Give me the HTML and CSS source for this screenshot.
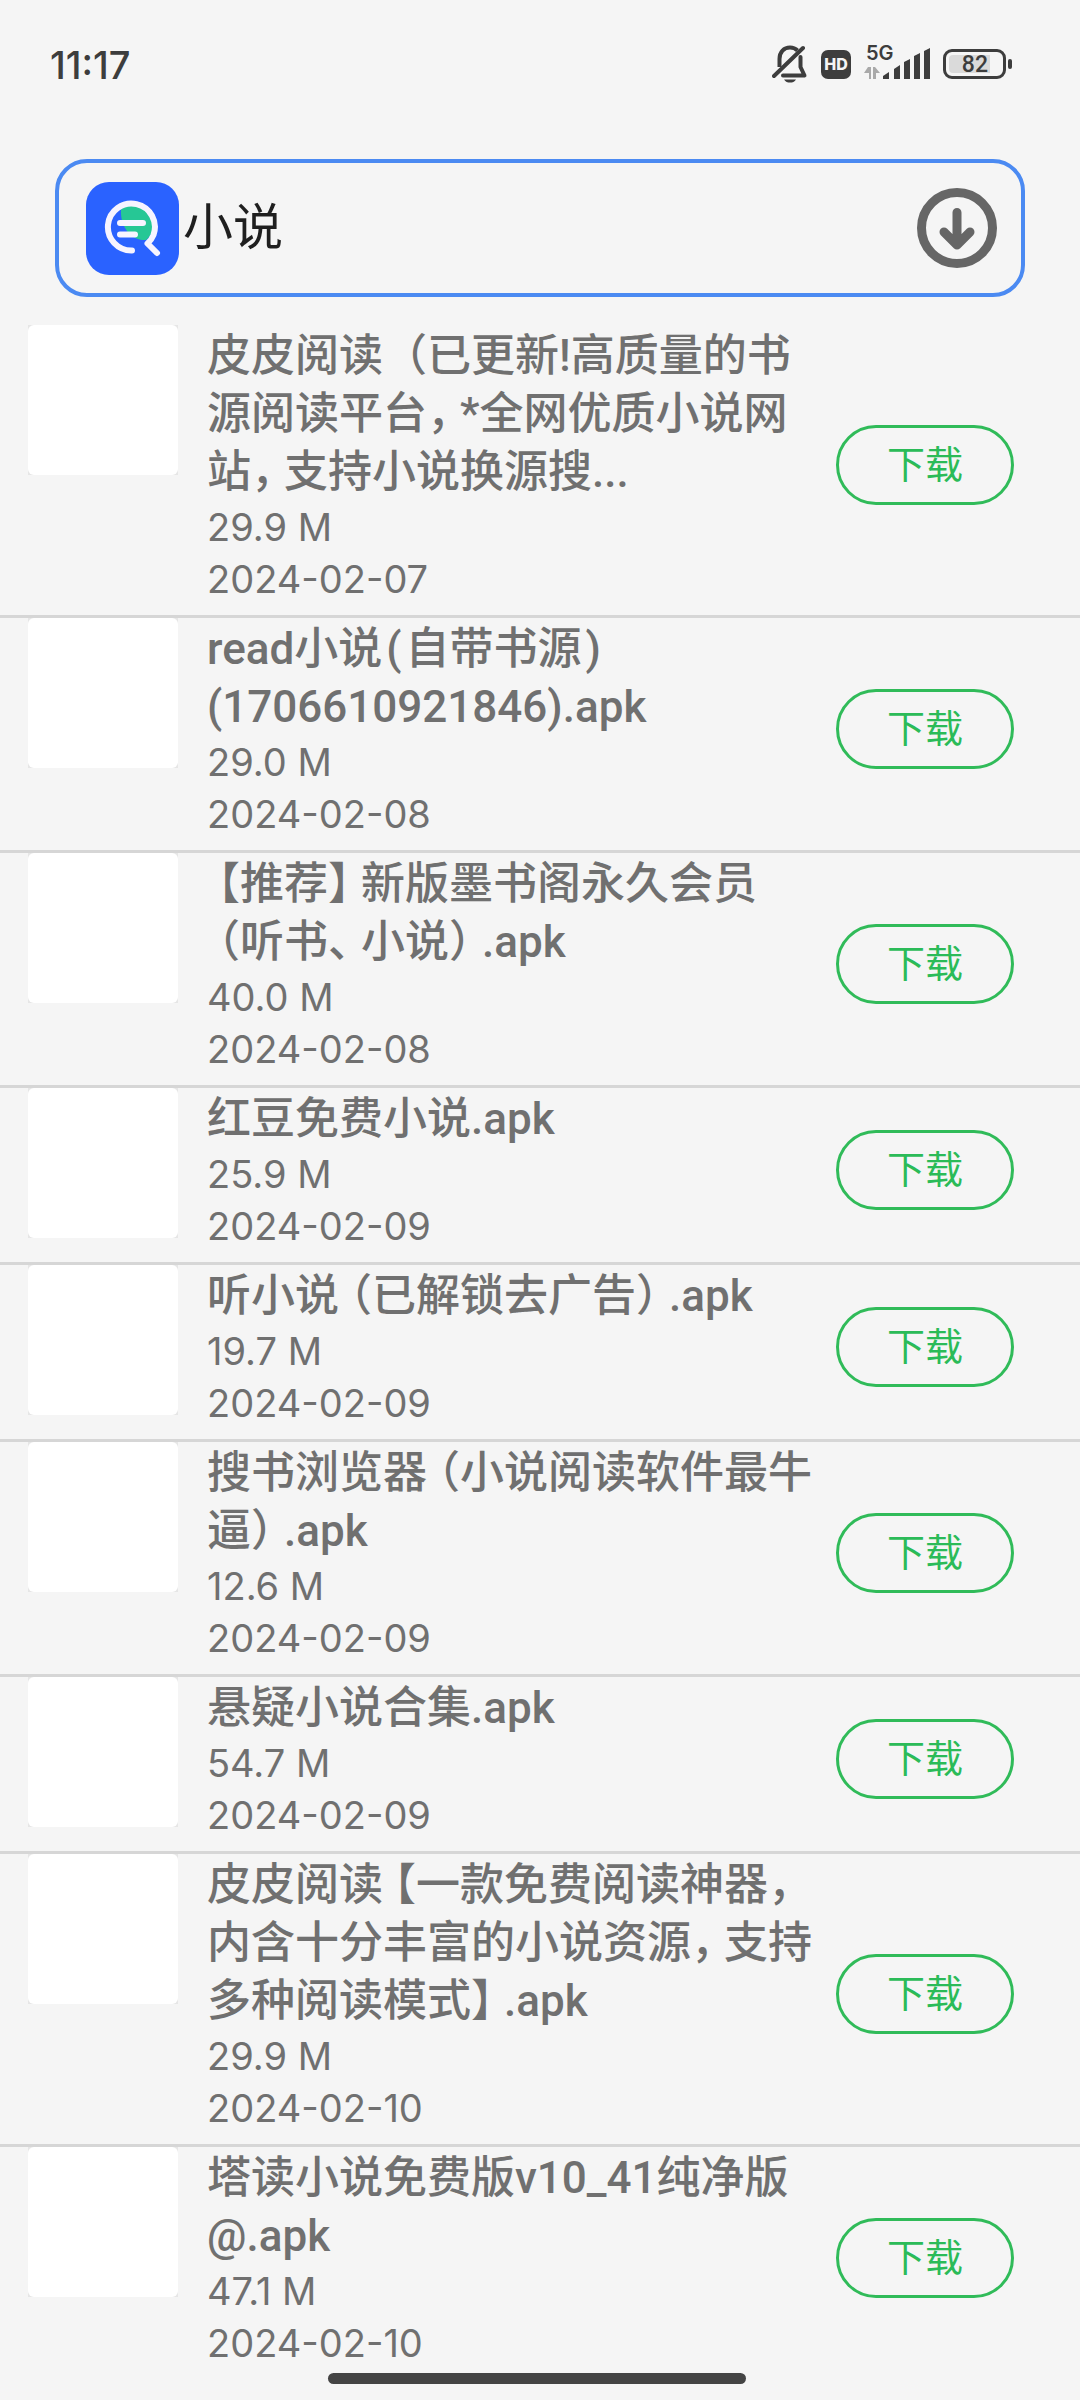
FILE: index.html
```html
<!DOCTYPE html>
<html lang="zh-CN">
<head>
<meta charset="utf-8">
<meta name="viewport" content="width=device-width, initial-scale=1">
<title>小说</title>
<link rel="stylesheet" href="styles.css">
</head>
<body>
<div class="status">
  <span class="time">11:17</span>
  <div class="status-icons">
    <svg class="bell" width="36" height="38" viewBox="0 0 36 38" fill="none" stroke="#3d3d3d" stroke-width="4">
      <path d="M7.500 22V14C7.500 7 12 2.500 18 2.500c3 0 5.500 1 7.500 3"/>
      <path d="M28.500 12v10l4 8.500H11" stroke-linejoin="round" stroke-linecap="round"/>
      <path d="M2 31 31 3" stroke-linecap="round"/>
      <path d="M12 34.500h12c-1.500 2.500-3.500 3-6 3s-4.500-.5-6-3z" fill="#3d3d3d" stroke="none"/>
    </svg>
    <span class="hd">HD</span>
    <div class="signal">
      <span class="net">5G</span>
      <svg width="66" height="32" viewBox="0 0 66 32">
        <path fill="#a9a9a9" d="M4 19h3v12H5v-6H0zM9 31V19h2l5 6h-4v6z"/>
        <g fill="#3d3d3d"><path d="M19 28l6-4v7h-6zM30 21l6-4v14h-6zM40 14l6-3v20h-6zM50 8l6-3v26h-6zM60 3l6-3v31h-6z"/></g>
      </svg>
    </div>
    <div class="battery"><span class="level">82</span></div>
  </div>
</div>

<form class="search">
  <svg class="logo" width="93" height="93" viewBox="0 0 93 93">
    <rect width="93" height="93" rx="23" fill="#2a62ff"/>
    <path d="M35 27.500C43 20 58 22 64.500 34c5 9 2 19-4.500 24-14 1-26-12-25-30.500z" fill="#26c795"/>
    <path d="M46 68.500A23.500 23.500 0 1 1 67.500 53q-2 5-6 8.500L71 71" fill="none" stroke="#f6f4ff" stroke-width="6" stroke-linecap="round" stroke-linejoin="round"/>
    <path d="M34 41h23M34 52.500h15" stroke="#f6f4ff" stroke-width="6" stroke-linecap="round"/>
  </svg>
  <input class="query" type="text" value="小说" aria-label="搜索">
  <button class="downloads" type="button" aria-label="下载管理">
    <svg width="80" height="80" viewBox="0 0 80 80" fill="none" stroke="#666" stroke-width="9" stroke-linecap="round" stroke-linejoin="round">
      <circle cx="40" cy="40" r="35.500"/>
      <path d="M40 24.500V56M27 44l13 13 13-13"/>
    </svg>
  </button>
</form>

<ul class="list">
  <li class="item">
    <div class="thumb"></div>
    <div class="info">
      <h2>皮皮阅读（已更新!高质量的书<br>源阅读平台<span class="close">，</span>*全网优质小说网<br>站<span class="close">，</span>支持小说换源搜...</h2>
      <p>29.9 M</p><p>2024-02-07</p>
    </div>
    <button class="get" type="button">下载</button>
  </li>
  <li class="item">
    <div class="thumb"></div>
    <div class="info">
      <h2>read小说<span class="paren">(</span>自带书源<span class="paren">)</span><br>(1706610921846).apk</h2>
      <p>29.0 M</p><p>2024-02-08</p>
    </div>
    <button class="get" type="button">下载</button>
  </li>
  <li class="item">
    <div class="thumb"></div>
    <div class="info">
      <h2><span class="open">【</span>推荐<span class="close">】</span>新版墨书阁永久会员<br><span class="open">（</span>听书<span class="close">、</span>小说<span class="close">）</span>.apk</h2>
      <p>40.0 M</p><p>2024-02-08</p>
    </div>
    <button class="get" type="button">下载</button>
  </li>
  <li class="item">
    <div class="thumb"></div>
    <div class="info">
      <h2>红豆免费小说.apk</h2>
      <p>25.9 M</p><p>2024-02-09</p>
    </div>
    <button class="get" type="button">下载</button>
  </li>
  <li class="item">
    <div class="thumb"></div>
    <div class="info">
      <h2>听小说<span class="open">（</span>已解锁去广告<span class="close">）</span>.apk</h2>
      <p>19.7 M</p><p>2024-02-09</p>
    </div>
    <button class="get" type="button">下载</button>
  </li>
  <li class="item">
    <div class="thumb"></div>
    <div class="info">
      <h2>搜书浏览器<span class="open">（</span>小说阅读软件最牛<br>逼<span class="close">）</span>.apk</h2>
      <p>12.6 M</p><p>2024-02-09</p>
    </div>
    <button class="get" type="button">下载</button>
  </li>
  <li class="item">
    <div class="thumb"></div>
    <div class="info">
      <h2>悬疑小说合集.apk</h2>
      <p>54.7 M</p><p>2024-02-09</p>
    </div>
    <button class="get" type="button">下载</button>
  </li>
  <li class="item">
    <div class="thumb"></div>
    <div class="info">
      <h2>皮皮阅读<span class="open">【</span>一款免费阅读神器<span class="close">，</span><br>内含十分丰富的小说资源<span class="close">，</span>支持<br>多种阅读模式<span class="close">】</span>.apk</h2>
      <p>29.9 M</p><p>2024-02-10</p>
    </div>
    <button class="get" type="button">下载</button>
  </li>
  <li class="item">
    <div class="thumb"></div>
    <div class="info">
      <h2>塔读小说免费版v10_41纯净版<br>@.apk</h2>
      <p>47.1 M</p><p>2024-02-10</p>
    </div>
    <button class="get" type="button">下载</button>
  </li>
</ul>

<div class="home"><span></span></div>
</body>
</html>
```
FILE: styles.css
```css
* { box-sizing: border-box; margin: 0; padding: 0; }

body {
  height: 100vh;
  display: flex;
  flex-direction: column;
  overflow: hidden;
  background: #f5f5f5;
  color: #707070;
  font-family: Roboto, "Noto Sans CJK SC", sans-serif;
}

/* status bar */
.status {
  flex: none;
  height: 129px;
  padding: 0 68px 0 50px;
  display: flex;
  justify-content: space-between;
  color: #3d3d3d;
}
.time {
  font: 500 38px/48px Inter, sans-serif;
  padding-top: 41px;
}
.status-icons {
  height: 38px;
  margin-top: 45px;
  display: flex;
  align-items: center;
  gap: 13px;
}
.hd {
  width: 30px;
  height: 29px;
  border-radius: 7px;
  background: #3d3d3d;
  color: #f5f5f5;
  font: 800 16px/29px Inter, sans-serif;
  text-align: center;
}
.signal { position: relative; height: 32px; }
.net {
  position: absolute;
  left: 2px;
  top: -6px;
  font: 600 20px/22px Inter, sans-serif;
}
.battery {
  position: relative;
  width: 63px;
  height: 30px;
  margin-right: 6px;
  border: 3px solid #3d3d3d;
  border-radius: 9px;
  padding: 3px;
}
.battery::after {
  content: "";
  position: absolute;
  right: -9px;
  top: 7px;
  width: 4px;
  height: 10px;
  border-radius: 2px;
  background: #3d3d3d;
}
.level {
  display: block;
  width: 41px;
  height: 18px;
  border-radius: 4px 0 0 4px;
  background: #dadada;
  font: 500 23px/19px Roboto, sans-serif;
  text-align: right;
  padding-right: 2px;
}

/* search box */
.search {
  flex: none;
  height: 138px;
  margin: 30px 55px 28px;
  padding: 0 24px 0 27px;
  border: 4px solid #4b8af2;
  border-radius: 32px;
  display: flex;
  align-items: center;
}
.logo { flex: none; }
.query {
  flex: 1;
  min-width: 0;
  height: 80px;
  padding-left: 4px;
  border: 0;
  outline: 0;
  background: none;
  color: #1f1f1f;
  font: 400 50px/80px Roboto, "Noto Sans CJK SC", sans-serif;
}
.downloads {
  width: 80px;
  height: 80px;
  border: 0;
  background: none;
}
.downloads svg { display: block; }

/* results */
.list {
  flex: 1;
  min-height: 0;
  overflow: hidden;
  list-style: none;
}
.item {
  display: flex;
  padding: 0 66px 10px 28px;
  border-bottom: 3px solid #d6d6d6;
}
.thumb {
  flex: none;
  width: 150px;
  height: 150px;
  background: #e6e6e6;
}
.thumb::before {
  content: "";
  display: block;
  height: 100%;
  border-radius: 6px;
  background: #fff;
}
.info {
  flex: 1;
  min-width: 0;
  margin-left: 29px;
  padding-top: 2px;
}
.info h2 {
  font-size: 44px;
  font-weight: 500;
  line-height: 58px;
  white-space: nowrap;
}
.info p {
  font: 400 38px/52px Inter, sans-serif;
}
/* full-width punctuation takes three quarters of an em */
.open, .close { font-feature-settings: "halt"; }
.open { margin-left: 11px; }
.close { margin-right: 11px; }
.paren { margin: 0 4px; }

.get {
  flex: none;
  align-self: center;
  width: 178px;
  height: 80px;
  border: 3px solid #30bb59;
  border-radius: 40px;
  background: none;
  color: #2bbb58;
  font: 400 38px/74px Roboto, "Noto Sans CJK SC", sans-serif;
}

/* gesture bar */
.home {
  flex: none;
  height: 27px;
  padding-right: 6px;
}
.home span {
  display: block;
  width: 418px;
  height: 11px;
  margin: 0 auto;
  border-radius: 6px;
  background: #444;
}
```
